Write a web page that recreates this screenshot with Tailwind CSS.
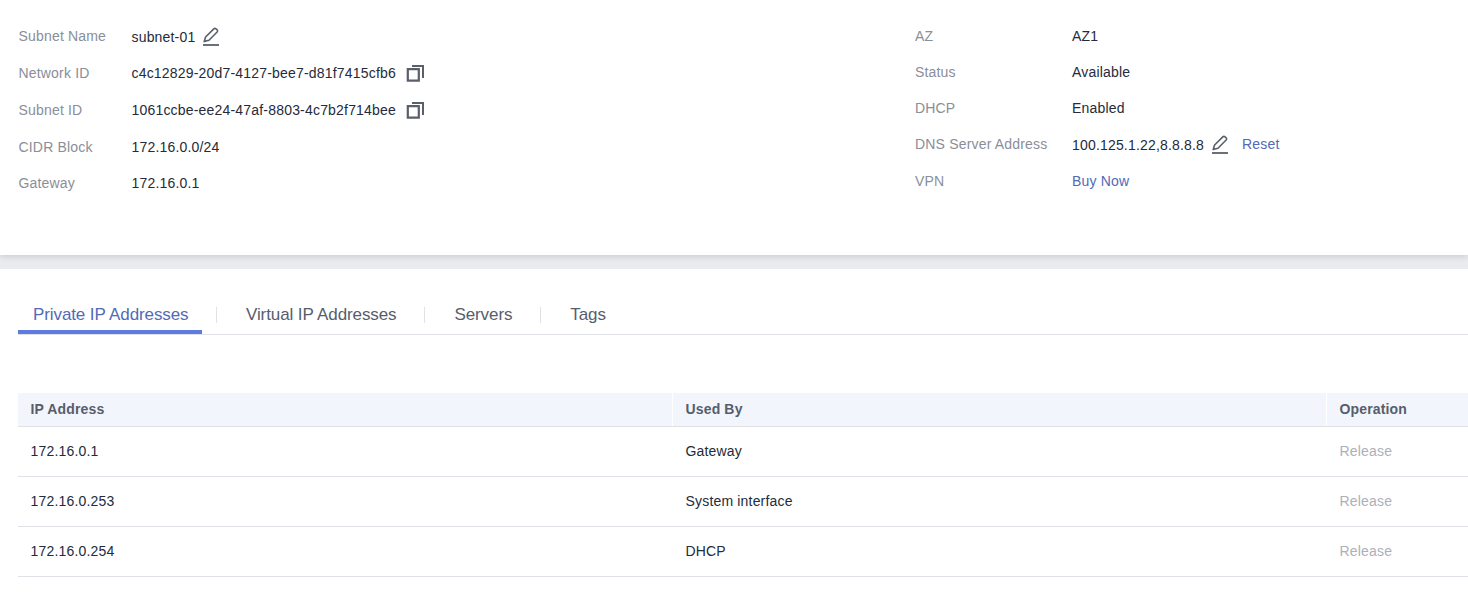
<!DOCTYPE html>
<html lang="en">
<head>
<meta charset="utf-8">
<title>Subnet details</title>
<script src="https://cdn.jsdelivr.net/npm/@tailwindcss/browser@4"></script>
</head>
<body class="bg-white w-[1468px] h-[595px] overflow-hidden font-['Liberation_Sans',Arial,sans-serif] text-[14px] leading-[20px] tracking-[0.18px] text-[#252b3a]">
<svg class="hidden">
  <symbol id="pen" viewBox="0 0 18 20"><path d="M1 18H17" fill="none" stroke="#5a5f69" stroke-width="1.8"/><path d="M2.2 14.6L3.6 10L11.8 1.9Q12.9 0.9 14 1.8L15 2.7Q16.1 3.8 15.1 5L7 13.2Z" fill="none" stroke="#5a5f69" stroke-width="1.6" stroke-linejoin="round"/></symbol>
  <symbol id="copy" viewBox="0 0 18 18"><path d="M1.8 5.2H12.8V16.6H1.8Z" fill="none" stroke="#5a5f69" stroke-width="2.2"/><path d="M6 2H17V14" fill="none" stroke="#5a5f69" stroke-width="2"/></symbol>
</svg>
<section class="h-[255px] flex pl-[18px] shadow-[0_2px_6px_rgba(0,0,0,0.12)] relative z-10 bg-white">
  <dl class="w-[897px] pt-[26px]">
    <div class="flex h-[37px]"><dt class="w-[113.5px] pl-[0.5px] text-[#8a8e99]">Subnet Name</dt><dd class="flex pt-px">subnet-01<svg class="w-[18px] h-[20px] ml-[7px]"><use href="#pen"/></svg></dd></div>
    <div class="flex h-[37px]"><dt class="w-[113.5px] pl-[0.5px] text-[#8a8e99]">Network ID</dt><dd class="flex tracking-[0.19px]">c4c12829-20d7-4127-bee7-d81f7415cfb6<svg class="w-[18px] h-[18px] ml-[9.5px] mt-px"><use href="#copy"/></svg></dd></div>
    <div class="flex h-[37px]"><dt class="w-[113.5px] pl-[0.5px] text-[#8a8e99]">Subnet ID</dt><dd class="flex tracking-[0.19px]">1061ccbe-ee24-47af-8803-4c7b2f714bee<svg class="w-[18px] h-[18px] ml-[9.5px] mt-px"><use href="#copy"/></svg></dd></div>
    <div class="flex h-[36px]"><dt class="w-[113.5px] pl-[0.5px] text-[#8a8e99]">CIDR Block</dt><dd>172.16.0.0/24</dd></div>
    <div class="flex h-[36px]"><dt class="w-[113.5px] pl-[0.5px] text-[#8a8e99]">Gateway</dt><dd>172.16.0.1</dd></div>
  </dl>
  <dl class="pt-[26px]">
    <div class="flex h-[36px]"><dt class="w-[157px] text-[#8a8e99]">AZ</dt><dd>AZ1</dd></div>
    <div class="flex h-[36px]"><dt class="w-[157px] text-[#8a8e99]">Status</dt><dd>Available</dd></div>
    <div class="flex h-[36px]"><dt class="w-[157px] text-[#8a8e99]">DHCP</dt><dd>Enabled</dd></div>
    <div class="flex h-[37px]"><dt class="w-[157px] text-[#8a8e99]">DNS Server Address</dt><dd class="flex"><span class="pt-px">100.125.1.22,8.8.8.8</span><svg class="w-[18px] h-[20px] ml-[7px] mt-px"><use href="#pen"/></svg><a class="ml-[13px] text-[#526ab8]">Reset</a></dd></div>
    <div class="flex h-[36px]"><dt class="w-[157px] text-[#8a8e99]">VPN</dt><dd class="text-[#526ab8]">Buy Now</dd></div>
  </dl>
</section>
<div class="h-[14px] bg-[#e9ebef]"></div>
<section class="pl-[18px]">
  <nav class="mt-[26px] h-[40px] flex border-b border-[#dfe1e6] text-[17px] tracking-[-0.1px] text-[#575d6c]">
    <div class="w-[184px] h-[39px] pt-[10px] pl-[15px] border-b-4 border-[#5e7ce0] text-[#526ab8]">Private IP Addresses</div>
    <div class="flex items-center h-[39px] pt-px"><i class="w-px h-[16px] bg-[#dfe1e6] ml-[14px] mr-[29px]"></i>Virtual IP Addresses<i class="w-px h-[16px] bg-[#dfe1e6] ml-[28px] mr-[29px]"></i>Servers<i class="w-px h-[16px] bg-[#dfe1e6] ml-[28px] mr-[29px]"></i>Tags</div>
  </nav>
  <div class="mt-[58px] grid grid-cols-[655px_654px_141px]">
    <div class="col-span-3 grid grid-cols-subgrid h-[34px] bg-[#f2f5fc] border-b border-[#dfe1e6] font-bold text-[#575d6c] tracking-[0.15px] *:pl-[12.5px] *:pt-[6px]"><div class="border-r border-white">IP Address</div><div class="border-r border-white">Used By</div><div>Operation</div></div>
    <div class="col-span-3 grid grid-cols-subgrid h-[50px] border-b border-[#dfe1e6] *:pl-[12.5px] *:pt-[14px]"><div>172.16.0.1</div><div>Gateway</div><div class="text-[#adb0b8]">Release</div></div>
    <div class="col-span-3 grid grid-cols-subgrid h-[50px] border-b border-[#dfe1e6] *:pl-[12.5px] *:pt-[14px]"><div>172.16.0.253</div><div>System interface</div><div class="text-[#adb0b8]">Release</div></div>
    <div class="col-span-3 grid grid-cols-subgrid h-[50px] border-b border-[#dfe1e6] *:pl-[12.5px] *:pt-[14px]"><div>172.16.0.254</div><div>DHCP</div><div class="text-[#adb0b8]">Release</div></div>
  </div>
</section>
</body>
</html>
